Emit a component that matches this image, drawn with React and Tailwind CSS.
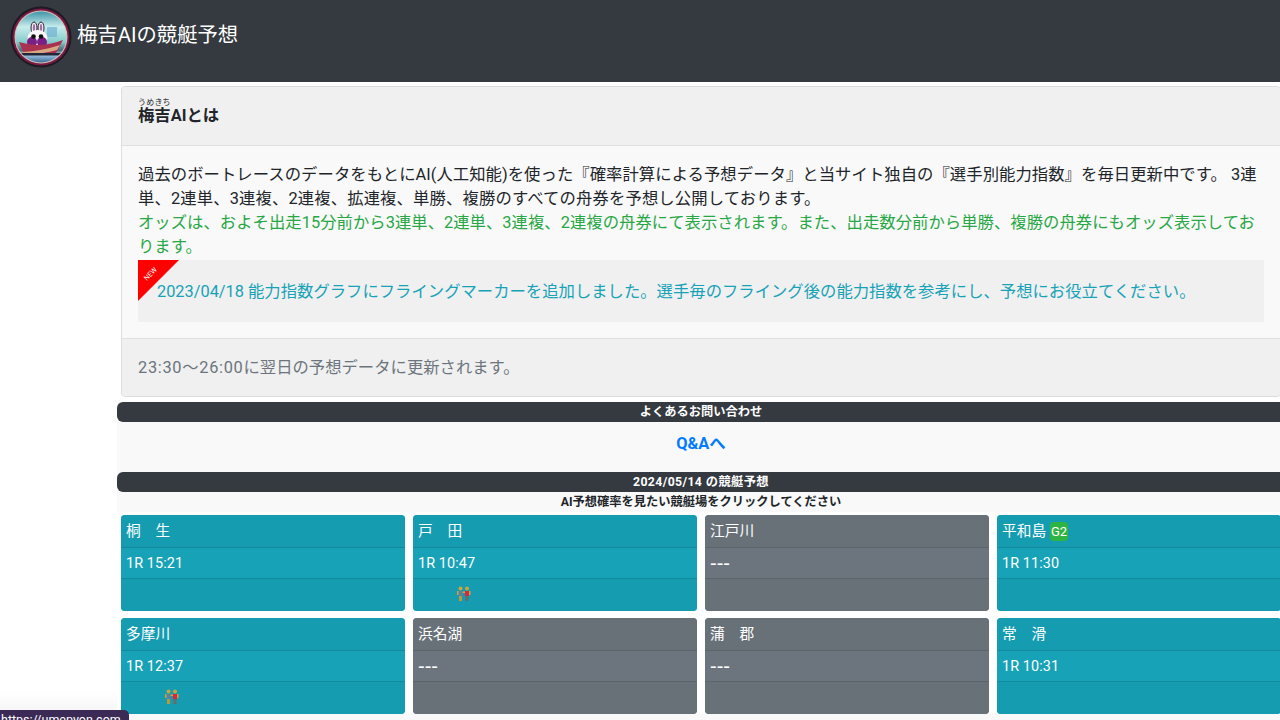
function Logo() {
  return (
    <svg width="62" height="62" viewBox="0 0 62 62" className="shrink-0">
      <defs>
        <linearGradient id="sky" x1="0" y1="0" x2="0" y2="1">
          <stop offset="0" stopColor="#3f95a8" />
          <stop offset="0.3" stopColor="#c8ecec" />
          <stop offset="0.6" stopColor="#86cccc" />
          <stop offset="0.76" stopColor="#4a6a7c" />
          <stop offset="0.84" stopColor="#a8cce8" />
          <stop offset="1" stopColor="#3c6c98" />
        </linearGradient>
        <clipPath id="c"><circle cx="31" cy="31" r="25.500" /></clipPath>
      </defs>
      <circle cx="31" cy="31" r="30.500" fill="#1d1a24" />
      <circle cx="31" cy="31" r="28.500" fill="#7b1a45" />
      <circle cx="31" cy="31" r="26.500" fill="#cfc4b4" />
      <circle cx="31" cy="31" r="25.500" fill="url(#sky)" />
      <g clipPath="url(#c)">
        <rect x="37" y="21" width="10" height="10" fill="#74b4d4" opacity="0.75" />
        <ellipse cx="24" cy="22" rx="3" ry="6" fill="#f4f0f4" stroke="#2a2030" />
        <ellipse cx="31" cy="22" rx="3" ry="6" fill="#f4f0f4" stroke="#2a2030" />
        <ellipse cx="24" cy="22" rx="1.200" ry="4" fill="#a070a8" />
        <ellipse cx="31" cy="22" rx="1.200" ry="4" fill="#a070a8" />
        <ellipse cx="27.500" cy="32" rx="10" ry="8" fill="#f8f6f8" />
        <circle cx="22" cy="36" r="5" fill="#7a1f86" />
        <circle cx="32" cy="36" r="5" fill="#7a1f86" />
        <circle cx="23.500" cy="30.500" r="2.300" fill="#111" />
        <circle cx="31" cy="30.500" r="2.300" fill="#111" />
        <path d="M9 36 Q30 43 53 34 L46 47 Q30 49 14 48 Z" fill="#a8324f" />
        <path d="M12 46 Q32 45 50 39 L47 44 Q30 49 14 48 Z" fill="#d9a882" />
        <rect x="6" y="47" width="50" height="2.500" fill="#232838" />
      </g>
    </svg>
  );
}

function Couple() {
  return (
    <svg width="14" height="16" viewBox="0 0 14 16" className="block">
      <circle cx="3.500" cy="2.500" r="2" fill="#c9a63a" />
      <circle cx="10" cy="2.500" r="2" fill="#c9a63a" />
      <rect x="1.500" y="5" width="4" height="5" fill="#5f7f9a" />
      <rect x="8" y="5" width="4" height="5" fill="#e0243c" />
      <rect x="0" y="5" width="1.500" height="4" fill="#c9a63a" />
      <rect x="5.500" y="5.500" width="2.500" height="1.500" fill="#c9a63a" />
      <rect x="12" y="5" width="1.500" height="4" fill="#c9a63a" />
      <rect x="2" y="10" width="3" height="5" fill="#b89a3a" />
      <rect x="8.500" y="10" width="3" height="5" fill="#6b6b6b" />
    </svg>
  );
}

function Venue({ name, time, active, grade, couple }) {
  const bg = active ? "bg-[#17a2b8]" : "bg-[#6c757d]";
  const cap = active ? "bg-[#169cb1]" : "bg-[#687178]";
  const line = active ? "border-[#13899c]" : "border-[#5c646b]";
  return (
    <div className={`h-[96px] rounded-[4px] overflow-hidden text-white text-[14.7px] leading-[21px] flex flex-col ${bg}`}>
      <div className={`h-[33px] px-[5px] pt-[6px] border-b flex items-start whitespace-pre ${cap} ${line}`}>
        <span>{name}</span>
        {grade && (
          <span className="ml-[4px] mt-[1px] w-[18px] h-[19px] rounded-[4px] bg-[#2fb344] text-[13px] leading-[19px] text-center">{grade}</span>
        )}
      </div>
      <div className={`h-[31px] px-[5px] pt-[5px] border-b ${line}`}>
        <span className={time === "---" ? "font-['Liberation_Sans'] text-[20px]" : "text-[14.4px] tracking-[0.1px]"}>{time}</span>
      </div>
      <div className={`flex-1 relative ${cap}`}>
        {couple && <div className="pl-[44px] pt-[7px]"><Couple /></div>}
      </div>
    </div>
  );
}

const venues = [
  { name: "桐　生", time: "1R 15:21", active: true },
  { name: "戸　田", time: "1R 10:47", active: true, couple: true },
  { name: "江戸川", time: "---" },
  { name: "平和島", time: "1R 11:30", active: true, grade: "G2" },
  { name: "多摩川", time: "1R 12:37", active: true, couple: true },
  { name: "浜名湖", time: "---" },
  { name: "蒲　郡", time: "---" },
  { name: "常　滑", time: "1R 10:31", active: true },
];

function Bar({ children }) {
  return (
    <div className="h-[20px] bg-[#343a40] rounded-t-[6px] rounded-bl-[6px] text-white text-[12.25px] leading-[20px] font-bold text-center">
      {children}
    </div>
  );
}

export default function App() {
  return (
    <div className="relative w-[1280px] h-[720px] overflow-hidden bg-white font-['Roboto','Noto_Sans_CJK_JP',sans-serif] [text-spacing-trim:space-all] text-[16.35px] text-[#212529]">
      <header className="h-[82px] bg-[#343a40] flex items-start pl-[10px] pt-[6px]">
        <Logo />
        <span className="ml-[5px] mt-[14px] text-white text-[20.35px] leading-[30px]">梅吉AIの競艇予想</span>
      </header>
      <div className="flex">
        <div className="w-[117px] shrink-0" />
        <main className="w-[1168px] shrink-0 bg-[#f9f9f9] h-[638px]">
          <div className="bg-white pl-[4px] pr-[4px] pt-[4px] pb-[5px]">
            <section className="h-[311px] border border-[#dcdddd] rounded-[4px] bg-[#f9f9f9] overflow-hidden flex flex-col">
              <div className="h-[59px] bg-[#f0f0f0] border-b border-[#dfdfdf] px-[16px] pt-[11px]">
                <h2 className="font-bold leading-[24px]">
                  <ruby>梅吉<rt className="text-[8px] font-normal leading-[10px]">うめきち</rt></ruby>AIとは
                </h2>
              </div>
              <div className="flex-1 px-[16px] pt-[17px] leading-[24px]">
                <p>
                  <span className="tracking-[0.05px]">過去のボートレースのデータをもとにAI(人工知能)を使った『確率計算による予想データ』と当サイト独自の『選手別能力指数』を毎日更新中です。 3連</span><br />
                  <span className="tracking-[0.13px]">単、2連単、3連複、2連複、拡連複、単勝、複勝のすべての舟券を予想し公開しております。</span>
                </p>
                <p className="text-[#28a745]">
                  <span className="tracking-[0.03px]">オッズは、およそ出走15分前から3連単、2連単、3連複、2連複の舟券にて表示されます。また、出走数分前から単勝、複勝の舟券にもオッズ表示してお</span><br />
                  ります。
                </p>
                <div className="relative mt-[1px] h-[62px] bg-[#f0f0f0] pl-[19px] pt-[19px] text-[#17a2b8]">
                  <div className="absolute left-0 top-0 w-[41px] h-[41px] bg-[#ff0000] [clip-path:polygon(0_0,100%_0,0_100%)]" />
                  <span className="absolute left-[1px] top-[10px] w-[24px] text-white text-[7px] leading-[9px] text-center -rotate-45">NEW</span>
                  <span className="relative top-[1px]">2023/04/18 能力指数グラフにフライングマーカーを追加しました。選手毎のフライング後の能力指数を参考にし、予想にお役立てください。</span>
                </div>
              </div>
              <div className="h-[58px] bg-[#f0f0f0] border-t border-[#dfdfdf] px-[16px] pt-[17px] leading-[24px] text-[#6c757d]">
                <span className="tracking-[0.7px]">23:30〜26:00</span>に翌日の予想データに更新されます。
              </div>
            </section>
          </div>
          <Bar>よくあるお問い合わせ</Bar>
          <div className="h-[50px] flex items-center justify-center pb-[6px]">
            <a className="text-[#007bff] font-bold leading-[24px]">Q&amp;Aへ</a>
          </div>
          <Bar><span className="tracking-[0.4px]">2024/05/14 の競艇予想</span></Bar>
          <div className="h-[20px] text-center text-[12.25px] leading-[21px] font-bold">AI予想確率を見たい競艇場をクリックしてください</div>
          <div className="bg-white pt-[3px] pl-[4px] grid grid-cols-[repeat(4,284px)] gap-x-[8px] gap-y-[7px]">
            {venues.map((v) => <Venue key={v.name} {...v} />)}
          </div>
        </main>
      </div>
      <div className="absolute left-0 bottom-0 w-[117px] h-[30px] bg-gradient-to-b from-transparent to-black/5" />
      <div className="absolute left-0 bottom-0 w-[129px] h-[10px] overflow-hidden rounded-tr-[5px] bg-[#3a2a55] text-white text-[12.5px] leading-[20px] pl-[1px] whitespace-nowrap">
        https://umepyon.com
      </div>
    </div>
  );
}
